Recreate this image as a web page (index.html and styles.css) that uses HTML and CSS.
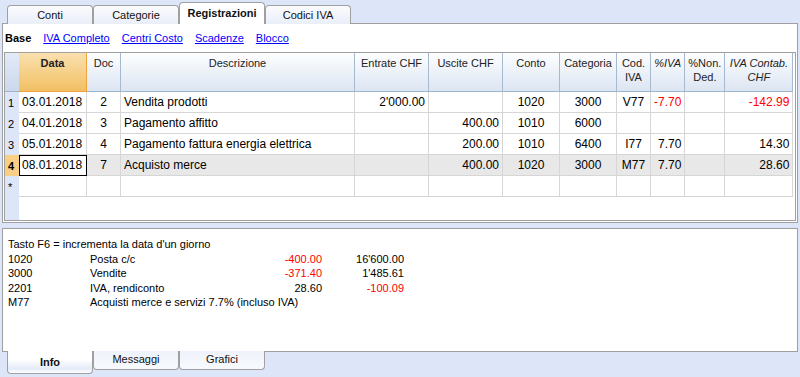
FILE: index.html
```html
<!DOCTYPE html>
<html lang="it">
  <head>
    <meta charset="UTF-8" />
    <title>Registrazioni</title>
    <link rel="stylesheet" href="styles.css">
  </head>
  <body>
    <div class="tabs top">
      <div class="tab">Conti</div>
      <div class="tab">Categorie</div>
      <div class="tab active">Registrazioni</div>
      <div class="tab">Codici IVA</div>
    </div>

    <div class="panel main">
      <div class="views">
        <b>Base</b>
        <a href="#">IVA Completo</a>
        <a href="#">Centri Costo</a>
        <a href="#">Scadenze</a>
        <a href="#">Blocco</a>
      </div>

      <div class="grid">
        <table>
          <thead>
            <tr>
              <th class="rh"></th>
              <th class="c-date cur">Data</th>
              <th class="c-doc">Doc</th>
              <th class="c-desc">Descrizione</th>
              <th class="c-amt">Entrate CHF</th>
              <th class="c-amt">Uscite CHF</th>
              <th class="c-acc">Conto</th>
              <th class="c-acc">Categoria</th>
              <th class="c-code">Cod.<br>IVA</th>
              <th class="c-code"><i>%IVA</i></th>
              <th class="c-nd">%Non.<br>Ded.</th>
              <th class="c-vat"><i>IVA Contab.<br>CHF</i></th>
            </tr>
          </thead>
          <tbody>
            <tr>
              <td class="rh">1</td>
              <td>03.01.2018</td>
              <td class="mid">2</td>
              <td>Vendita prodotti</td>
              <td class="num">2'000.00</td>
              <td></td>
              <td class="mid">1020</td>
              <td class="mid">3000</td>
              <td class="mid">V77</td>
              <td class="num neg">-7.70</td>
              <td></td>
              <td class="num neg">-142.99</td>
            </tr>
            <tr>
              <td class="rh">2</td>
              <td>04.01.2018</td>
              <td class="mid">3</td>
              <td>Pagamento affitto</td>
              <td></td>
              <td class="num">400.00</td>
              <td class="mid">1010</td>
              <td class="mid">6000</td>
              <td></td>
              <td></td>
              <td></td>
              <td></td>
            </tr>
            <tr>
              <td class="rh">3</td>
              <td>05.01.2018</td>
              <td class="mid">4</td>
              <td>Pagamento fattura energia elettrica</td>
              <td></td>
              <td class="num">200.00</td>
              <td class="mid">1010</td>
              <td class="mid">6400</td>
              <td class="mid">I77</td>
              <td class="num">7.70</td>
              <td></td>
              <td class="num">14.30</td>
            </tr>
            <tr class="sel">
              <td class="rh">4</td>
              <td class="focus">08.01.2018</td>
              <td class="mid">7</td>
              <td>Acquisto merce</td>
              <td></td>
              <td class="num">400.00</td>
              <td class="mid">1020</td>
              <td class="mid">3000</td>
              <td class="mid">M77</td>
              <td class="num">7.70</td>
              <td></td>
              <td class="num">28.60</td>
            </tr>
            <tr>
              <td class="rh">*</td>
              <td></td><td></td><td></td><td></td><td></td>
              <td></td><td></td><td></td><td></td><td></td><td></td>
            </tr>
          </tbody>
        </table>
      </div>
    </div>

    <div class="panel info">
      <div class="line">Tasto F6 = incrementa la data d'un giorno</div>
      <div class="line">
        <span class="code">1020</span><span class="name">Posta c/c</span>
        <span class="val neg">-400.00</span><span class="bal">16'600.00</span>
      </div>
      <div class="line">
        <span class="code">3000</span><span class="name">Vendite</span>
        <span class="val neg">-371.40</span><span class="bal">1'485.61</span>
      </div>
      <div class="line">
        <span class="code">2201</span><span class="name">IVA, rendiconto</span>
        <span class="val">28.60</span><span class="bal neg">-100.09</span>
      </div>
      <div class="line">
        <span class="code">M77</span><span class="name">Acquisti merce e servizi 7.7% (incluso IVA)</span>
      </div>
    </div>

    <div class="tabs bottom">
      <div class="tab active">Info</div>
      <div class="tab">Messaggi</div>
      <div class="tab">Grafici</div>
    </div>
  </body>
</html>
```

FILE: styles.css
```css
* {
  box-sizing: border-box;
}
body {
  margin: 0;
  height: 377px;
  overflow: hidden;
  background-color: #dce6f8;
  font-family: "Liberation Sans", Arial, sans-serif;
  font-size: 11px;
  color: #000;
}

/* tab strips */
.tabs {
  display: flex;
  padding-left: 7px;
  position: relative;
  z-index: 1;
}
.tabs.top {
  height: 24px;
  align-items: flex-end;
  margin-bottom: -1px;
}
.tab {
  width: 86px;
  height: 19px;
  border: 1px solid #a0a0a0;
  text-align: center;
  color: #111;
}
.tabs.top .tab {
  border-bottom: none;
  border-radius: 4px 4px 0 0;
  line-height: 18px;
  background: linear-gradient(#fbfcfe, #e9eef8);
}
.tabs.top .tab.active {
  height: 22px;
  font-weight: bold;
  line-height: 20px;
  background: #fff;
}
.tabs.bottom {
  align-items: flex-start;
  margin-top: -1px;
}
.tabs.bottom .tab {
  height: 19px;
  border-top: none;
  border-radius: 0 0 4px 4px;
  line-height: 17px;
  background: linear-gradient(#eef2fa, #f8faff);
}
.tabs.bottom .tab.active {
  height: 23px;
  font-weight: bold;
  line-height: 23px;
  background: linear-gradient(#fff 40%, #e4ebf8 80%, #fff);
}

/* panels */
.panel {
  margin: 0 2px;
  border: 1px solid #a0a0a0;
  background-color: #fff;
}
.main {
  height: 200px;
}
.views {
  display: flex;
  align-items: center;
  gap: 12px;
  height: 28px;
  padding-left: 2px;
}
.views a {
  color: #0000ff;
}

/* data grid */
.grid {
  margin: 0 1px;
  height: 169px;
  border: 1px solid #a0a0a0;
  background: linear-gradient(to right, #dce6f8 14px, #fff 14px);
}
table {
  border-collapse: separate;
  border-spacing: 0;
  table-layout: fixed;
  font-size: 12px;
}
th {
  height: 39px;
  padding: 3px 2px 0;
  vertical-align: top;
  font-size: 11px;
  font-weight: normal;
  line-height: 14px;
  color: #222;
  background: linear-gradient(#fdfeff, #dce5f2);
  border-right: 1px solid #a7b9d1;
  border-bottom: 1px solid #9fb3cd;
}
th.rh {
  border-right: none;
  background: linear-gradient(#e2eaf7, #cbd8ec);
}
th.cur {
  font-weight: bold;
  background: linear-gradient(#fae0ae, #f2c064);
  border-right-color: #f0a43a;
  border-bottom-color: #f0a43a;
}
td {
  height: 21px;
  padding: 0 3px;
  white-space: nowrap;
  border-right: 1px solid #d6d6d6;
  border-bottom: 1px solid #d6d6d6;
}
td.rh {
  padding: 0 0 0 3px;
  font-size: 11px;
  border: none;
  background-color: #dce6f8;
}
.rh { width: 14px; }
.c-date { width: 68px; }
.c-doc { width: 34px; }
.c-desc { width: 234px; }
.c-amt { width: 74px; }
.c-acc { width: 57px; }
.c-code { width: 34px; }
.c-nd { width: 40px; }
.c-vat { width: 68px; }
.mid {
  text-align: center;
}
.num {
  text-align: right;
}
.neg {
  color: #ff0000;
}
tr.sel td {
  background-color: #e8e8e8;
}
tr.sel td.rh {
  font-weight: bold;
  background-color: #f8cf84;
}
tr.sel td.focus {
  background-color: #fff;
  outline: 1px solid #000;
  outline-offset: -1px;
}

/* info pane */
.info {
  margin-top: 5px;
  height: 124px;
  padding: 8px 5px 0;
  line-height: 14.5px;
}
.line {
  display: flex;
  white-space: nowrap;
}
.code {
  width: 82px;
}
.name {
  width: 172px;
}
.val {
  width: 60px;
  text-align: right;
}
.bal {
  width: 82px;
  text-align: right;
}
```
